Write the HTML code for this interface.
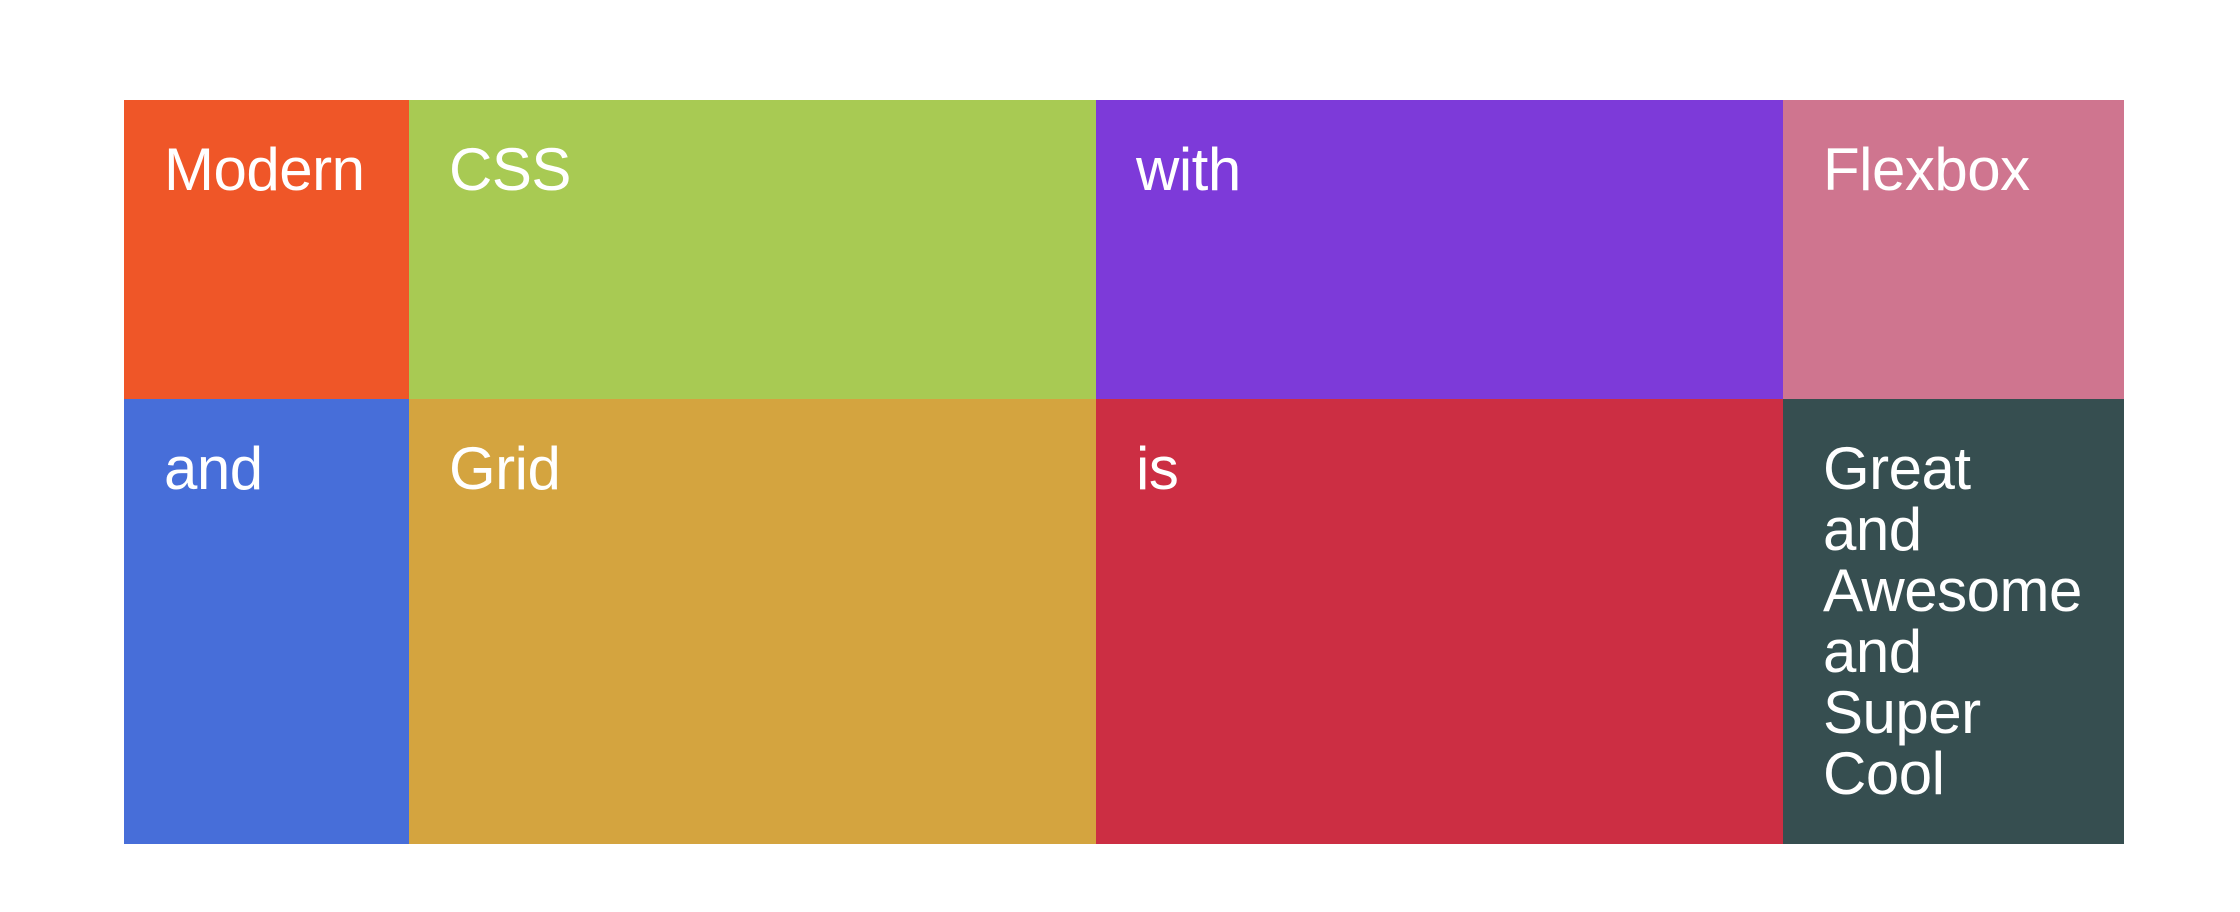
<!DOCTYPE html>
<html><head><style>
html,body{margin:0;padding:0;background:#fff;width:2240px;height:912px;overflow:hidden}
.g{position:absolute;left:124px;top:100px;width:2000px;height:744px;display:grid;
grid-template-columns:285px 687px 687px 341px;grid-template-rows:299px 445px}
.g div{padding:39px 40px 0 40px;box-sizing:border-box;color:#fff;font-family:"Liberation Sans",Helvetica,Arial,sans-serif;font-size:60px;line-height:61px;letter-spacing:-0.5px;overflow:hidden}
</style></head><body>
<div class="g">
<div style="background:#ef5628">Modern</div>
<div style="background:#a8ca53">CSS</div>
<div style="background:#7d3ad9">with</div>
<div style="background:#cf758f">Flexbox</div>
<div style="background:#476ed9">and</div>
<div style="background:#d4a43f">Grid</div>
<div style="background:#cc2e43">is</div>
<div style="background:#364e50">Great<br>and<br>Awesome<br>and<br>Super<br>Cool</div>
</div>
</body></html>
